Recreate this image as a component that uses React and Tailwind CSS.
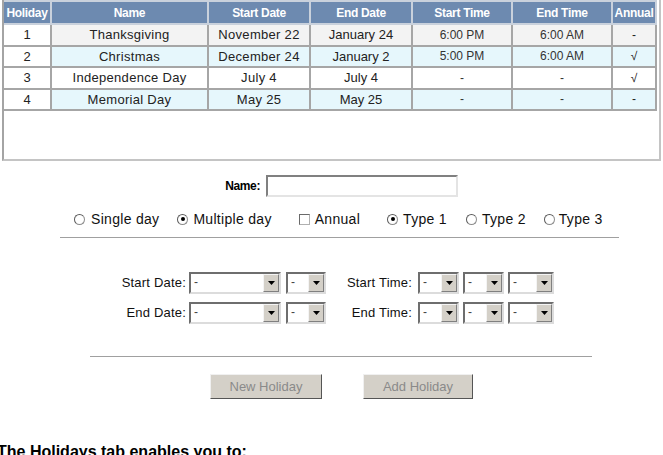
import React from "react"

const rows = [
  { id: "1", name: "Thanksgiving", start: "November 22", end: "January 24", st: "6:00 PM", et: "6:00 AM", annual: "-", bg: "bg-[#f3f3f3]" },
  { id: "2", name: "Christmas", start: "December 24", end: "January 2", st: "5:00 PM", et: "6:00 AM", annual: "√", bg: "bg-[#e6f7fc]" },
  { id: "3", name: "Independence Day", start: "July 4", end: "July 4", st: "-", et: "-", annual: "√", bg: "bg-white" },
  { id: "4", name: "Memorial Day", start: "May 25", end: "May 25", st: "-", et: "-", annual: "-", bg: "bg-[#e6f7fc]" },
]

const headers = ["Holiday", "Name", "Start Date", "End Date", "Start Time", "End Time", "Annual"]

const Radio = ({ checked }) => (
  <span className="w-[11px] h-[11px] rounded-full border border-[#8c8c8c] border-l-[#5a5a5a] border-t-[#5a5a5a] bg-white flex items-center justify-center shrink-0">
    {checked ? <span className="w-[4px] h-[4px] rounded-full bg-black" /> : null}
  </span>
)

const Check = () => (
  <span className="w-[11px] h-[11px] border border-[#6a6a6a] border-b-[#b0b0b0] border-r-[#b0b0b0] bg-white shrink-0" />
)

const Select = ({ className }) => (
  <div className={"flex h-[22px] bg-white border-2 border-t-[#6e6e6e] border-l-[#6e6e6e] border-b-[#dcdcdc] border-r-[#dcdcdc] " + className}>
    <span className="flex-1 pl-[3px] text-[12px] leading-[17px] text-[#444]">-</span>
    <span className="w-[16px] h-[18px] bg-[#d4d0c8] border border-t-[#f4f4f4] border-l-[#f4f4f4] border-b-[#808080] border-r-[#808080] flex items-center justify-center">
      <svg width="7" height="4" viewBox="0 0 7 4">
        <path d="M0 0h7L3.5 4z" fill="#000" />
      </svg>
    </span>
  </div>
)

const App = () => {
  return (
    <div className="w-[663px] h-[455px] overflow-hidden bg-white relative font-['Liberation_Sans',Arial,sans-serif] text-[#222]">
      <div className="ml-[2px] mt-[-2px] w-[659px] h-[163px] border-2 border-[#a4a4a4] border-r-[#c4c4c4] border-b-[#c4c4c4] overflow-hidden">
        <table className="table-fixed border-collapse w-[653px] -ml-[2px]">
          <colgroup>
            <col className="w-[48px]" />
            <col className="w-[157px]" />
            <col className="w-[102px]" />
            <col className="w-[102px]" />
            <col className="w-[100px]" />
            <col className="w-[100px]" />
            <col className="w-[44px]" />
          </colgroup>
          <thead>
            <tr className="h-[23px]">
              {headers.map((h) => (
                <th
                  key={h}
                  className="bg-[#6d8ab0] text-white text-[12px] font-bold border-2 border-[#c9d1dc] p-0 leading-none tracking-[-0.3px]"
                >
                  {h}
                </th>
              ))}
            </tr>
          </thead>
          <tbody>
            {rows.map((r) => (
              <tr key={r.id} className="h-[21.5px] text-[13px] text-center">
                <td className="bg-white border-2 border-[#a6a6a6] p-0 leading-none">{r.id}</td>
                <td className={r.bg + " border-2 border-[#a6a6a6] p-0 leading-none tracking-[0.3px]"}>{r.name}</td>
                <td className={r.bg + " border-2 border-[#a6a6a6] p-0 leading-none tracking-[0.3px]"}>{r.start}</td>
                <td className={r.bg + " border-2 border-[#a6a6a6] p-0 leading-none"}>{r.end}</td>
                <td className={r.bg + " border-2 border-[#a6a6a6] p-0 leading-none text-[12px] text-[#333]"}>{r.st}</td>
                <td className={r.bg + " border-2 border-[#a6a6a6] p-0 leading-none text-[12px] text-[#333]"}>{r.et}</td>
                <td className={r.bg + " border-2 border-[#a6a6a6] p-0 leading-none text-[12px]"}>{r.annual}</td>
              </tr>
            ))}
          </tbody>
        </table>
      </div>

      <div className="flex items-center mt-[14px] h-[22px]">
        <span className="w-[266px] text-right pr-[6px] text-[12px] font-bold text-black tracking-[-0.4px]">Name:</span>
        <div className="w-[192px] h-[22px] border-2 border-t-[#808080] border-l-[#808080] border-b-[#e4e4e4] border-r-[#e4e4e4] bg-white" />
      </div>

      <div className="flex items-center mt-[14px] h-[16px] text-[14px] text-[#111] tracking-[0.3px]">
        <div className="flex items-center gap-[6px] ml-[74px]"><Radio /><span>Single day</span></div>
        <div className="flex items-center gap-[5px] ml-[18px]"><Radio checked /><span>Multiple day</span></div>
        <div className="flex items-center gap-[5px] ml-[27px]"><Check /><span>Annual</span></div>
        <div className="flex items-center gap-[5px] ml-[27px]"><Radio checked /><span>Type 1</span></div>
        <div className="flex items-center gap-[5px] ml-[19px]"><Radio /><span>Type 2</span></div>
        <div className="flex items-center gap-[4px] ml-[18px]"><Radio /><span>Type 3</span></div>
      </div>

      <div className="ml-[60px] w-[559px] h-[1px] bg-[#a0a0a0] mt-[10px]" />

      <div className="flex flex-col gap-[8px] mt-[34px] text-[13px] text-[#111] tracking-[0.2px]">
        <div className="flex items-center h-[22px]">
          <span className="w-[189px] text-right pr-[3px]">Start Date:</span>
          <Select className="w-[92px]" />
          <Select className="w-[40px] ml-[5px]" />
          <span className="w-[92px] text-right pr-[6px]">Start Time:</span>
          <Select className="w-[41px]" />
          <Select className="w-[41px] ml-[4px]" />
          <Select className="w-[46px] ml-[4px]" />
        </div>
        <div className="flex items-center h-[22px]">
          <span className="w-[189px] text-right pr-[3px]">End Date:</span>
          <Select className="w-[92px]" />
          <Select className="w-[40px] ml-[5px]" />
          <span className="w-[92px] text-right pr-[6px]">End Time:</span>
          <Select className="w-[41px]" />
          <Select className="w-[41px] ml-[4px]" />
          <Select className="w-[46px] ml-[4px]" />
        </div>
      </div>

      <div className="ml-[90px] w-[502px] h-[1px] bg-[#a0a0a0] mt-[32px]" />

      <div className="flex mt-[17px] h-[25px]">
        <button className="ml-[210px] w-[112px] h-[25px] bg-[#d4d0c8] text-[13px] text-[#8a8a8a] border border-t-[#f0f0f0] border-l-[#f0f0f0] border-b-[#555] border-r-[#555]">
          New Holiday
        </button>
        <button className="ml-[41px] w-[110px] h-[25px] bg-[#d4d0c8] text-[13px] text-[#8a8a8a] border border-t-[#f0f0f0] border-l-[#f0f0f0] border-b-[#555] border-r-[#555]">
          Add Holiday
        </button>
      </div>

      <p className="mt-[45px] ml-[-3px] text-[16px] font-bold text-black leading-none">The Holidays tab enables you to:</p>
    </div>
  )
}

export default App
